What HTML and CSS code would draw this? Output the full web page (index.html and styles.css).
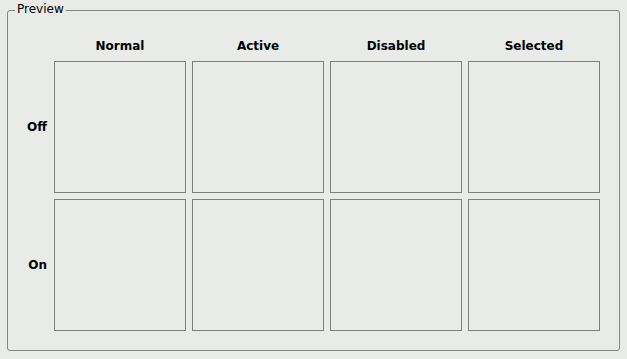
FILE: index.html
```html
<!DOCTYPE html>
<html lang="en">
<head>
    <meta charset="UTF-8">
    <title>Preview</title>
    <link rel="stylesheet" href="styles.css">
</head>
<body>

    <!-- Preview frame -->
    <div class="frame">
        <span class="legend">Preview</span>

        <div class="grid">
            <div class="corner"></div>
            <div class="col-label">Normal</div>
            <div class="col-label">Active</div>
            <div class="col-label">Disabled</div>
            <div class="col-label">Selected</div>

            <div class="row-label">Off</div>
            <div class="cell"></div>
            <div class="cell"></div>
            <div class="cell"></div>
            <div class="cell"></div>

            <div class="row-label">On</div>
            <div class="cell"></div>
            <div class="cell"></div>
            <div class="cell"></div>
            <div class="cell"></div>
        </div>
    </div>

</body>
</html>
```

FILE: styles.css
```css
* {
    box-sizing: border-box;
    margin: 0;
    padding: 0;
}

body {
    font-family: "DejaVu Sans", sans-serif;
    font-size: 12px;
    line-height: 14px;
    color: #000000;
    background-color: #e8ebe7;
    width: 627px;
    height: 359px;
    overflow: hidden;
}

.frame {
    position: relative;
    width: 613px;
    margin: 10px 0 0 7px;
    border: 1px solid #838581;
    border-radius: 3px;
}

/* legend sits over the top border */
.legend {
    position: absolute;
    top: -9px;
    left: 7px;
    padding: 0 2px;
    background-color: #e8ebe7;
}

.grid {
    display: grid;
    grid-template-columns: 40px repeat(4, 132px);
    grid-template-rows: 16px 132px 132px;
    gap: 6px;
    padding: 28px 0 19px 0;
}

.col-label {
    font-weight: bold;
    text-align: center;
}

.row-label {
    align-self: center;
    text-align: right;
    padding-right: 1px;
    font-weight: bold;
}

.cell {
    border: 1px solid #7e807c;
}
```
